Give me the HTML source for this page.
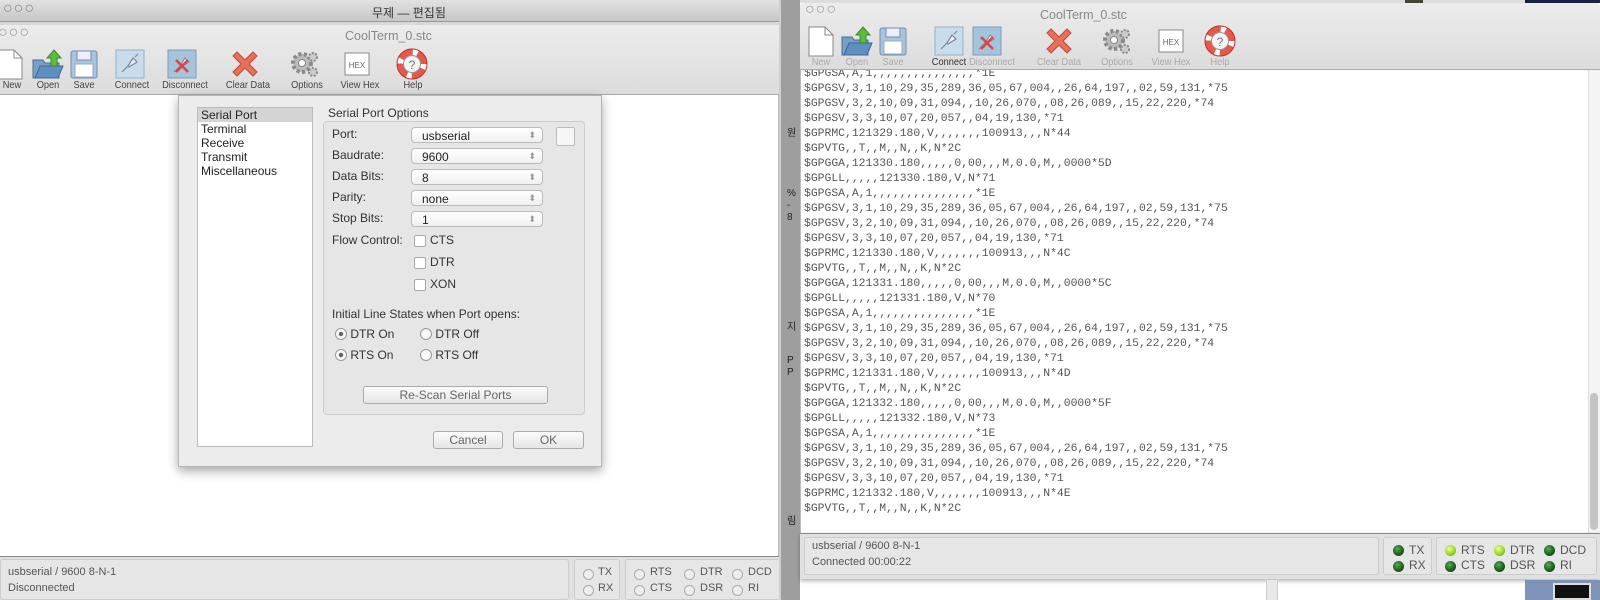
<!DOCTYPE html>
<html><head><meta charset="utf-8">
<style>
*{box-sizing:border-box;margin:0;padding:0}
body{width:1600px;height:600px;position:relative;overflow:hidden;background:#fff;font-family:"Liberation Sans","Noto Sans CJK KR",sans-serif;font-size:12px;color:#333}
.abs{position:absolute}
.tb{background:linear-gradient(#ececec,#dcdcdc);}
.lbl{position:absolute;font-size:10.5px;color:#444;text-align:center;width:80px;margin-left:-40px;transform:scaleX(.88)}
.ico{position:absolute;width:32px;height:32px;margin-left:-16px}
.dot{position:absolute;width:11px;height:11px;border-radius:50%;border:1px solid #aaa;background:#eee}
.circ{display:inline-block;width:12px;height:12px;border-radius:50%;border:1px solid #999;background:#fafafa}
.pop{position:absolute;height:16px;border:1px solid #bbb;border-radius:4px;background:linear-gradient(#fff,#f0f0f0);font-size:12px;padding:1px 0 0 10px;color:#222}
.pop:after{content:"⬍";position:absolute;right:6px;top:2px;font-size:9px;color:#999}
.cb{position:absolute;width:12px;height:12px;border:1px solid #aaa;border-radius:2px;background:#fff}
.btn{position:absolute;height:18px;border:1px solid #aaa;border-radius:3px;background:linear-gradient(#fbfbfb,#e6e6e6);text-align:center;font-size:12px;color:#666;padding-top:1px}
.led{position:absolute;width:11px;height:11px;border-radius:50%;background:radial-gradient(circle at 40% 35%,#5a5 0,#185a18 60%,#0c3a0c 100%)}
.ledon{background:radial-gradient(circle at 40% 35%,#eaffa0 0,#9ad820 55%,#5a9010 100%)}
.sl{position:absolute;font-size:12px;color:#555}
.tl{position:absolute;font-size:16px;color:#999;letter-spacing:1px}
pre{font-family:"Liberation Mono",monospace;font-size:11.4px;line-height:15px;color:#555}
</style></head><body>

<div class="abs" style="left:0;top:0;width:782px;height:22px;background:linear-gradient(#e2e2e2,#c6c6c6);border-bottom:1px solid #999"></div>
<div class="tl" style="left:3px;top:0px;color:#888">○○○</div>
<div class="abs" style="left:372px;top:4px;font-size:12px;color:#333">무제 — 편집됨</div>
<div class="abs" style="left:0;top:22px;width:782px;height:3px;background:#d8d8d8"></div>

<div class="abs tb" style="left:0;top:25px;width:780px;height:70px;border-bottom:1px solid #aaa"></div>
<div class="tl" style="left:-2px;top:24px">○○○</div>
<div class="abs" style="left:345px;top:29px;font-size:12.5px;color:#888">CoolTerm_0.stc</div>

<svg class="ico" style="left:10px;top:48px" viewBox="0 0 32 32"><path d="M4 2h16l8 8v21H4z" fill="#fff" stroke="#888"/><path d="M20 2v8h8" fill="none" stroke="#888"/></svg>
<svg class="ico" style="left:48px;top:48px" viewBox="0 0 32 32"><path d="M1 12h10l2 3h14v15H1z" fill="#7a9fc4" stroke="#4a6f94"/><path d="M3 30l5-12h23l-5 12z" fill="#5e8fc0" stroke="#3a6a9a"/><path d="M22 2l7 8h-4v8h-6v-8h-4z" fill="#5cbd3c" stroke="#3a8a2a"/></svg>
<svg class="ico" style="left:84px;top:48px" viewBox="0 0 32 32"><rect x="3" y="3" width="26" height="27" rx="2" fill="#a8c4de" stroke="#6f8fae"/><rect x="9" y="3" width="14" height="9" fill="#eef" stroke="#6f8fae"/><rect x="7" y="16" width="18" height="13" fill="#fff" stroke="#9ab"/></svg>
<svg class="ico" style="left:130px;top:48px" viewBox="0 0 32 32"><rect x="2" y="2" width="28" height="28" fill="#c9dcec" stroke="#8fb0cc"/><path d="M8 24l6-6m0 0l5-8 4 4-8 5zM21 9l3-3" stroke="#789" fill="#eef" stroke-width="1.2"/></svg>
<svg class="ico" style="left:182px;top:48px" viewBox="0 0 32 32"><rect x="2" y="2" width="28" height="28" fill="#a6c3dc" stroke="#7a9cbc"/><path d="M8 24l6-6 5-8 4 4-8 5z" stroke="#789" fill="#eef"/><path d="M10 12l12 12M22 12L10 24" stroke="#d44" stroke-width="2.5"/></svg>
<svg class="ico" style="left:245px;top:48px" viewBox="0 0 32 32"><path d="M4 8l4-4 8 8 8-8 4 4-8 8 8 8-4 4-8-8-8 8-4-4 8-8z" fill="#e8705a" stroke="#c04a3a"/></svg>
<svg class="ico" style="left:305px;top:48px" viewBox="0 0 32 32"><circle cx="13" cy="15" r="9" fill="#bbb" stroke="#888" stroke-width="4" stroke-dasharray="3 2.5"/><circle cx="13" cy="15" r="3.5" fill="#fff" stroke="#888"/><circle cx="24" cy="9" r="4" fill="#ccc" stroke="#888" stroke-width="2" stroke-dasharray="2 1.5"/><circle cx="24" cy="24" r="4" fill="#ccc" stroke="#888" stroke-width="2" stroke-dasharray="2 1.5"/></svg>
<svg class="ico" style="left:357px;top:48px" viewBox="0 0 32 32"><rect x="4" y="5" width="24" height="22" fill="#fff" stroke="#888"/><text x="16" y="20" font-size="8" text-anchor="middle" fill="#666" font-family="Liberation Sans">HEX</text></svg>
<svg class="ico" style="left:412px;top:48px" viewBox="0 0 32 32"><circle cx="16" cy="16" r="12" fill="none" stroke="#e25a4a" stroke-width="7"/><circle cx="16" cy="16" r="12" fill="none" stroke="#fff" stroke-width="7" stroke-dasharray="5 14"/><circle cx="16" cy="16" r="8.5" fill="#f4f4f4" stroke="#999"/><text x="16" y="21" font-size="12" text-anchor="middle" fill="#777" font-family="Liberation Sans">?</text><circle cx="16" cy="16" r="15" fill="none" stroke="#b33" stroke-width="1"/></svg>
<div class="lbl" style="left:12px;top:79px">New</div>
<div class="lbl" style="left:48px;top:79px">Open</div>
<div class="lbl" style="left:84px;top:79px">Save</div>
<div class="lbl" style="left:132px;top:79px">Connect</div>
<div class="lbl" style="left:185px;top:79px">Disconnect</div>
<div class="lbl" style="left:248px;top:79px">Clear Data</div>
<div class="lbl" style="left:307px;top:79px">Options</div>
<div class="lbl" style="left:360px;top:79px">View Hex</div>
<div class="lbl" style="left:413px;top:79px">Help</div>

<div class="abs" style="left:0;top:95px;width:779px;height:461px;background:#fff;border-right:1px solid #bbb"></div>

<div class="abs" style="left:178px;top:95px;width:424px;height:372px;background:#ececec;border:1px solid #b5b5b5;box-shadow:0 4px 10px rgba(0,0,0,.35)"></div>
<div class="abs" style="left:197px;top:107px;width:116px;height:340px;background:#fff;border:1px solid #bbb"></div>
<div class="abs" style="left:198px;top:108px;width:114px;height:14px;background:#d4d4d4"></div>
<div class="abs" style="left:201px;top:108px;font-size:12px;line-height:14px;color:#222">Serial Port<br>Terminal<br>Receive<br>Transmit<br>Miscellaneous</div>

<div class="abs" style="left:328px;top:106px;font-size:12px;color:#333">Serial Port Options</div>
<div class="abs" style="left:323px;top:121px;width:262px;height:294px;border:1px solid #ccc;border-radius:4px;background:#e6e6e6"></div>
<div class="sl" style="left:332px;top:127px;color:#333">Port:</div>
<div class="sl" style="left:332px;top:148px;color:#333">Baudrate:</div>
<div class="sl" style="left:332px;top:169px;color:#333">Data Bits:</div>
<div class="sl" style="left:332px;top:190px;color:#333">Parity:</div>
<div class="sl" style="left:332px;top:211px;color:#333">Stop Bits:</div>
<div class="sl" style="left:332px;top:233px;color:#333">Flow Control:</div>
<div class="pop" style="left:411px;top:127px;width:132px">usbserial</div>
<div class="pop" style="left:411px;top:148px;width:132px">9600</div>
<div class="pop" style="left:411px;top:169px;width:132px">8</div>
<div class="pop" style="left:411px;top:190px;width:132px">none</div>
<div class="pop" style="left:411px;top:211px;width:132px">1</div>
<div class="abs" style="left:556px;top:127px;width:19px;height:19px;border:1px solid #bbb;border-radius:2px;background:#f6f6f6"></div>
<div class="cb" style="left:414px;top:235px"></div><div class="sl" style="left:430px;top:233px;color:#333">CTS</div>
<div class="cb" style="left:414px;top:257px"></div><div class="sl" style="left:430px;top:255px;color:#333">DTR</div>
<div class="cb" style="left:414px;top:279px"></div><div class="sl" style="left:430px;top:277px;color:#333">XON</div>
<div class="sl" style="left:332px;top:307px;color:#333">Initial Line States when Port opens:</div>
<div class="abs" style="left:335px;top:327px;font-size:12px;color:#333"><span class="circ" style="vertical-align:-2px;background:radial-gradient(#666 0 2px,#fafafa 2.5px)"></span> DTR On</div>
<div class="abs" style="left:420px;top:327px;font-size:12px;color:#333"><span class="circ" style="vertical-align:-2px"></span> DTR Off</div>
<div class="abs" style="left:335px;top:348px;font-size:12px;color:#333"><span class="circ" style="vertical-align:-2px;background:radial-gradient(#666 0 2px,#fafafa 2.5px)"></span> RTS On</div>
<div class="abs" style="left:420px;top:348px;font-size:12px;color:#333"><span class="circ" style="vertical-align:-2px"></span> RTS Off</div>
<div class="btn" style="left:363px;top:386px;width:185px">Re-Scan Serial Ports</div>
<div class="btn" style="left:433px;top:431px;width:70px">Cancel</div>
<div class="btn" style="left:513px;top:431px;width:71px">OK</div>

<div class="abs" style="left:0;top:556px;width:780px;height:44px;background:#e0e0e0;border-top:1px solid #888"></div>
<div class="abs" style="left:0;top:559px;width:569px;height:41px;background:#e6e6e6;border:1px solid #ccc;border-radius:3px"></div>
<div class="abs" style="left:574px;top:559px;width:46px;height:41px;background:#e6e6e6;border:1px solid #ccc;border-radius:3px"></div>
<div class="abs" style="left:625px;top:559px;width:155px;height:41px;background:#e6e6e6;border:1px solid #ccc;border-radius:3px"></div>
<div class="sl" style="left:8px;top:566px;font-size:11px">usbserial / 9600 8-N-1</div>
<div class="sl" style="left:8px;top:582px;font-size:11px">Disconnected</div>
<div class="dot" style="left:583px;top:569px"></div><div class="sl" style="left:598px;top:566px;font-size:11px">TX</div>
<div class="dot" style="left:583px;top:585px"></div><div class="sl" style="left:598px;top:582px;font-size:11px">RX</div>
<div class="dot" style="left:634px;top:569px"></div><div class="sl" style="left:650px;top:566px;font-size:11px">RTS</div>
<div class="dot" style="left:634px;top:585px"></div><div class="sl" style="left:650px;top:582px;font-size:11px">CTS</div>
<div class="dot" style="left:684px;top:569px"></div><div class="sl" style="left:700px;top:566px;font-size:11px">DTR</div>
<div class="dot" style="left:684px;top:585px"></div><div class="sl" style="left:700px;top:582px;font-size:11px">DSR</div>
<div class="dot" style="left:732px;top:569px"></div><div class="sl" style="left:748px;top:566px;font-size:11px">DCD</div>
<div class="dot" style="left:732px;top:585px"></div><div class="sl" style="left:748px;top:582px;font-size:11px">RI</div>

<div class="abs" style="left:779px;top:0;width:21px;height:600px;background:#9e9e9e;border-left:2px solid #cfcfcf"></div>
<div class="abs" style="left:787px;top:128px;font-size:10px;color:#222;line-height:12px">원<br><br><br><br><br>%<br>-<br>8</div>
<div class="abs" style="left:787px;top:318px;font-size:10px;color:#222">지</div>
<div class="abs" style="left:787px;top:355px;font-size:10px;color:#222;line-height:12px">P<br>P</div>
<div class="abs" style="left:787px;top:512px;font-size:10px;color:#222">림</div>

<div class="abs" style="left:800px;top:0;width:800px;height:3px;background:#ddd"></div>
<div class="abs" style="left:1405px;top:0;width:18px;height:3px;background:#443"></div>
<div class="abs" style="left:1525px;top:0;width:75px;height:3px;background:#1a2040"></div>
<div class="abs tb" style="left:800px;top:3px;width:800px;height:67px;border-bottom:1px solid #aaa;border-radius:4px 4px 0 0"></div>
<div class="tl" style="left:805px;top:1px">○○○</div>
<div class="abs" style="left:1040px;top:8px;font-size:12.5px;color:#888">CoolTerm_0.stc</div>

<svg class="ico" style="left:821px;top:25px" viewBox="0 0 32 32"><path d="M4 2h16l8 8v21H4z" fill="#fff" stroke="#888"/><path d="M20 2v8h8" fill="none" stroke="#888"/></svg>
<svg class="ico" style="left:857px;top:25px" viewBox="0 0 32 32"><path d="M1 12h10l2 3h14v15H1z" fill="#7a9fc4" stroke="#4a6f94"/><path d="M3 30l5-12h23l-5 12z" fill="#5e8fc0" stroke="#3a6a9a"/><path d="M22 2l7 8h-4v8h-6v-8h-4z" fill="#5cbd3c" stroke="#3a8a2a"/></svg>
<svg class="ico" style="left:893px;top:25px" viewBox="0 0 32 32"><rect x="3" y="3" width="26" height="27" rx="2" fill="#a8c4de" stroke="#6f8fae"/><rect x="9" y="3" width="14" height="9" fill="#eef" stroke="#6f8fae"/><rect x="7" y="16" width="18" height="13" fill="#fff" stroke="#9ab"/></svg>
<svg class="ico" style="left:949px;top:25px" viewBox="0 0 32 32"><rect x="2" y="2" width="28" height="28" fill="#c9dcec" stroke="#8fb0cc"/><path d="M8 24l6-6m0 0l5-8 4 4-8 5zM21 9l3-3" stroke="#789" fill="#eef" stroke-width="1.2"/></svg>
<svg class="ico" style="left:987px;top:25px" viewBox="0 0 32 32"><rect x="2" y="2" width="28" height="28" fill="#a6c3dc" stroke="#7a9cbc"/><path d="M8 24l6-6 5-8 4 4-8 5z" stroke="#789" fill="#eef"/><path d="M10 12l12 12M22 12L10 24" stroke="#d44" stroke-width="2.5"/></svg>
<svg class="ico" style="left:1059px;top:25px" viewBox="0 0 32 32"><path d="M4 8l4-4 8 8 8-8 4 4-8 8 8 8-4 4-8-8-8 8-4-4 8-8z" fill="#e8705a" stroke="#c04a3a"/></svg>
<svg class="ico" style="left:1117px;top:25px" viewBox="0 0 32 32"><circle cx="13" cy="15" r="9" fill="#bbb" stroke="#888" stroke-width="4" stroke-dasharray="3 2.5"/><circle cx="13" cy="15" r="3.5" fill="#fff" stroke="#888"/><circle cx="24" cy="9" r="4" fill="#ccc" stroke="#888" stroke-width="2" stroke-dasharray="2 1.5"/><circle cx="24" cy="24" r="4" fill="#ccc" stroke="#888" stroke-width="2" stroke-dasharray="2 1.5"/></svg>
<svg class="ico" style="left:1171px;top:25px" viewBox="0 0 32 32"><rect x="4" y="5" width="24" height="22" fill="#fff" stroke="#888"/><text x="16" y="20" font-size="8" text-anchor="middle" fill="#666" font-family="Liberation Sans">HEX</text></svg>
<svg class="ico" style="left:1220px;top:25px" viewBox="0 0 32 32"><circle cx="16" cy="16" r="12" fill="none" stroke="#e25a4a" stroke-width="7"/><circle cx="16" cy="16" r="12" fill="none" stroke="#fff" stroke-width="7" stroke-dasharray="5 14"/><circle cx="16" cy="16" r="8.5" fill="#f4f4f4" stroke="#999"/><text x="16" y="21" font-size="12" text-anchor="middle" fill="#777" font-family="Liberation Sans">?</text><circle cx="16" cy="16" r="15" fill="none" stroke="#b33" stroke-width="1"/></svg>
<div class="lbl" style="left:821px;top:56px;color:#aaa">New</div>
<div class="lbl" style="left:857px;top:56px;color:#aaa">Open</div>
<div class="lbl" style="left:893px;top:56px;color:#aaa">Save</div>
<div class="lbl" style="left:949px;top:56px;color:#333">Connect</div>
<div class="lbl" style="left:992px;top:56px;color:#aaa">Disconnect</div>
<div class="lbl" style="left:1059px;top:56px;color:#aaa">Clear Data</div>
<div class="lbl" style="left:1117px;top:56px;color:#aaa">Options</div>
<div class="lbl" style="left:1171px;top:56px;color:#aaa">View Hex</div>
<div class="lbl" style="left:1220px;top:56px;color:#aaa">Help</div>

<div class="abs" style="left:800px;top:70px;width:788px;height:463px;background:#fff;overflow:hidden;border-left:1px solid #bbb">
<pre style="margin:-3px 0 0 3px">$GPGSA,A,1,,,,,,,,,,,,,,,*1E
$GPGSV,3,1,10,29,35,289,36,05,67,004,,26,64,197,,02,59,131,*75
$GPGSV,3,2,10,09,31,094,,10,26,070,,08,26,089,,15,22,220,*74
$GPGSV,3,3,10,07,20,057,,04,19,130,*71
$GPRMC,121329.180,V,,,,,,,100913,,,N*44
$GPVTG,,T,,M,,N,,K,N*2C
$GPGGA,121330.180,,,,,0,00,,,M,0.0,M,,0000*5D
$GPGLL,,,,,121330.180,V,N*71
$GPGSA,A,1,,,,,,,,,,,,,,,*1E
$GPGSV,3,1,10,29,35,289,36,05,67,004,,26,64,197,,02,59,131,*75
$GPGSV,3,2,10,09,31,094,,10,26,070,,08,26,089,,15,22,220,*74
$GPGSV,3,3,10,07,20,057,,04,19,130,*71
$GPRMC,121330.180,V,,,,,,,100913,,,N*4C
$GPVTG,,T,,M,,N,,K,N*2C
$GPGGA,121331.180,,,,,0,00,,,M,0.0,M,,0000*5C
$GPGLL,,,,,121331.180,V,N*70
$GPGSA,A,1,,,,,,,,,,,,,,,*1E
$GPGSV,3,1,10,29,35,289,36,05,67,004,,26,64,197,,02,59,131,*75
$GPGSV,3,2,10,09,31,094,,10,26,070,,08,26,089,,15,22,220,*74
$GPGSV,3,3,10,07,20,057,,04,19,130,*71
$GPRMC,121331.180,V,,,,,,,100913,,,N*4D
$GPVTG,,T,,M,,N,,K,N*2C
$GPGGA,121332.180,,,,,0,00,,,M,0.0,M,,0000*5F
$GPGLL,,,,,121332.180,V,N*73
$GPGSA,A,1,,,,,,,,,,,,,,,*1E
$GPGSV,3,1,10,29,35,289,36,05,67,004,,26,64,197,,02,59,131,*75
$GPGSV,3,2,10,09,31,094,,10,26,070,,08,26,089,,15,22,220,*74
$GPGSV,3,3,10,07,20,057,,04,19,130,*71
$GPRMC,121332.180,V,,,,,,,100913,,,N*4E
$GPVTG,,T,,M,,N,,K,N*2C</pre>
</div>
<div class="abs" style="left:1588px;top:70px;width:12px;height:463px;background:#f4f4f4;border-left:1px solid #ddd"></div>
<div class="abs" style="left:1590px;top:393px;width:8px;height:137px;background:#c4c4c4;border-radius:4px"></div>

<div class="abs" style="left:800px;top:533px;width:800px;height:46px;background:#e0e0e0;border-top:1px solid #888;box-shadow:0 2px 4px rgba(0,0,0,.3)"></div>
<div class="abs" style="left:804px;top:537px;width:575px;height:38px;background:#e6e6e6;border:1px solid #ccc;border-radius:3px"></div>
<div class="abs" style="left:1383px;top:537px;width:49px;height:38px;background:#e6e6e6;border:1px solid #ccc;border-radius:3px"></div>
<div class="abs" style="left:1436px;top:537px;width:161px;height:38px;background:#e6e6e6;border:1px solid #ccc;border-radius:3px"></div>
<div class="sl" style="left:812px;top:540px;font-size:11px">usbserial / 9600 8-N-1</div>
<div class="sl" style="left:812px;top:556px;font-size:11px">Connected 00:00:22</div>
<div class="led" style="left:1393px;top:545px"></div><div class="sl" style="left:1409px;top:543px">TX</div>
<div class="led" style="left:1393px;top:561px"></div><div class="sl" style="left:1409px;top:558px">RX</div>
<div class="led ledon" style="left:1445px;top:545px"></div><div class="sl" style="left:1461px;top:543px">RTS</div>
<div class="led" style="left:1445px;top:561px"></div><div class="sl" style="left:1461px;top:558px">CTS</div>
<div class="led ledon" style="left:1494px;top:545px"></div><div class="sl" style="left:1510px;top:543px">DTR</div>
<div class="led" style="left:1494px;top:561px"></div><div class="sl" style="left:1510px;top:558px">DSR</div>
<div class="led" style="left:1544px;top:545px"></div><div class="sl" style="left:1560px;top:543px">DCD</div>
<div class="led" style="left:1544px;top:561px"></div><div class="sl" style="left:1560px;top:558px">RI</div>

<div class="abs" style="left:1266px;top:580px;width:12px;height:20px;background:#e8e8e8;border-left:1px solid #ccc;border-right:1px solid #ccc"></div>
<div class="abs" style="left:1525px;top:580px;width:75px;height:20px;background:#7d93b8"></div>
<div class="abs" style="left:1553px;top:583px;width:38px;height:17px;background:#111;border:2px solid #ddd"></div>
</body></html>
